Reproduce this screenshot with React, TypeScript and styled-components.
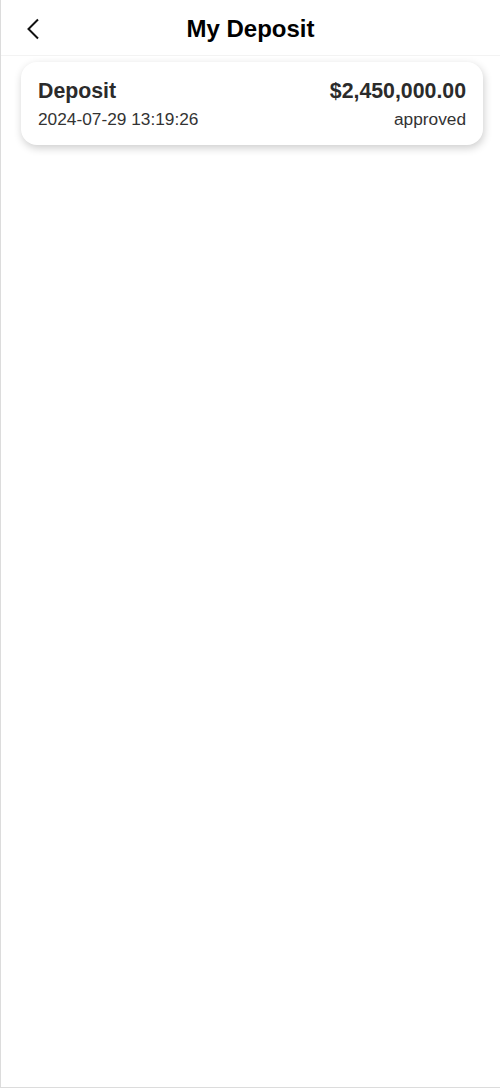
import React from "react";
import styled, { createGlobalStyle } from "styled-components";

const Global = createGlobalStyle`
  * { box-sizing: border-box; }
  html, body { margin: 0; padding: 0; background: #fff; }
  body { font-family: "Liberation Sans", Arial, sans-serif; }
`;

const Page = styled.div`
  min-height: 1088px;
  border-left: 1px solid #dcdcdc;
  border-bottom: 1px solid #dcdcdc;
  background: #fff;
`;

const Header = styled.header`
  height: 56px;
  padding-top: 2px;
  display: grid;
  grid-template-columns: 1fr auto 1fr;
  align-items: center;
  border-bottom: 1px solid #f3f3f3;
`;

const BackButton = styled.button`
  justify-self: start;
  margin-left: 20px;
  width: 24px;
  height: 24px;
  padding: 0;
  border: none;
  background: none;
  display: flex;
  align-items: center;
  justify-content: center;
  cursor: pointer;
`;

const Title = styled.h1`
  margin: 0;
  font-size: 24px;
  font-weight: 700;
  color: #000;
`;

const List = styled.div`
  padding: 6px 17px 0 20px;
  display: flex;
  flex-direction: column;
  gap: 12px;
`;

const Card = styled.div`
  background: #fff;
  border-radius: 16px;
  box-shadow: 1px 3px 8px rgba(0, 0, 0, 0.2);
  padding: 17px 17px 15px;
  display: flex;
  flex-direction: column;
  gap: 5px;
`;

const Row = styled.div`
  display: flex;
  justify-content: space-between;
  align-items: baseline;
`;

const Strong = styled.span`
  font-size: 21.3px;
  font-weight: 700;
  color: #2b2b2b;
`;

const Muted = styled.span`
  font-size: 17.3px;
  color: #333;
`;

const records = [
  { type: "Deposit", amount: "$2,450,000.00", date: "2024-07-29 13:19:26", status: "approved" },
];

export default function App() {
  return (
    <>
      <Global />
      <Page>
        <Header>
          <BackButton aria-label="Back">
            <svg width="14" height="22" viewBox="0 0 14 22">
              <polyline points="12,1.5 2.5,11 12,20.5" fill="none" stroke="#111" strokeWidth="2" />
            </svg>
          </BackButton>
          <Title>My Deposit</Title>
          <span />
        </Header>
        <List>
          {records.map((r, i) => (
            <Card key={i}>
              <Row>
                <Strong>{r.type}</Strong>
                <Strong>{r.amount}</Strong>
              </Row>
              <Row>
                <Muted>{r.date}</Muted>
                <Muted>{r.status}</Muted>
              </Row>
            </Card>
          ))}
        </List>
      </Page>
    </>
  );
}
